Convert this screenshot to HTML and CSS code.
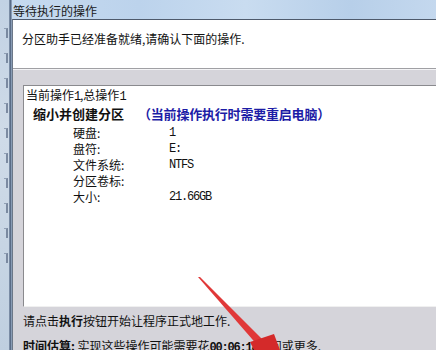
FILE: index.html
```html
<!DOCTYPE html>
<html lang="zh-CN">
<head>
    <meta charset="UTF-8">
    <title>等待执行的操作</title>
    <link rel="stylesheet" href="styles.css">
</head>
<body>
    <div class="screen">
        <div class="backdrop">
            <i></i><i></i><i></i><i></i><i></i><i></i><i></i><i></i><i></i><i></i>
        </div>
        <div class="edge"></div>
        <div class="dialog">
            <div class="titlebar">等待执行的操作</div>
            <div class="client">
                <div class="header">分区助手已经准备就绪,请确认下面的操作.</div>
                <div class="body">
                    <div class="listbox">
                        <div class="line">当前操作<span class="num">1</span>,总操作<span class="num">1</span></div>
                        <div class="op">
                            <span class="op-name">缩小并创建分区</span>
                            <span class="op-note">（当前操作执行时需要重启电脑）</span>
                        </div>
                        <div class="props">
                            <div class="prop"><span class="label">硬盘:</span><span class="num">1</span></div>
                            <div class="prop"><span class="label">盘符:</span><span class="num">E:</span></div>
                            <div class="prop"><span class="label">文件系统:</span><span class="num">NTFS</span></div>
                            <div class="prop"><span class="label">分区卷标:</span><span class="num"></span></div>
                            <div class="prop"><span class="label">大小:</span><span class="num">21.66GB</span></div>
                        </div>
                    </div>
                    <p class="hint">请点击<b>执行</b>按钮开始让程序正式地工作.</p>
                    <p class="hint"><b>时间估算:</b> 实现这些操作可能需要花<b class="num">00:06:18</b>时间或更多.</p>
                </div>
            </div>
        </div>

        <!-- red annotation arrow drawn over the dialog -->
        <svg class="arrow" width="436" height="350" viewBox="0 0 436 350">
            <polygon points="198,277 200,277 266,343 259,347" fill="#e03838"/>
            <polygon points="250,342 274,334 280,350 254,350" fill="#d42a2a"/>
        </svg>
    </div>
</body>
</html>
```

FILE: styles.css
```css
* {
    margin: 0;
    padding: 0;
    box-sizing: border-box;
}

body {
    font-family: "Noto Sans CJK SC", "Liberation Sans", sans-serif;
    font-size: 12px;
    color: #111;
    background: #d5d4da;
    overflow: hidden;
}

.screen {
    position: relative;
    width: 436px;
    height: 350px;
    display: flex;
    overflow: hidden;
}

.backdrop {
    width: 9px;
    background: linear-gradient(180deg, #c2d2e4 0%, #cfdbe8 40%, #bfcfe0 100%);
    display: flex;
    flex-direction: column;
    align-items: flex-end;
    gap: 15px;
    padding: 28px 1px 0 0;
}

.backdrop i {
    display: block;
    width: 4px;
    height: 10px;
    border-right: 2px solid #5a6a84;
    border-top: 1px solid #7888a0;
    opacity: 0.7;
}

.edge {
    width: 3px;
    background: linear-gradient(90deg, #8a9cb4, #5a6c86, #9fb3cc);
}

.dialog {
    flex: 1;
    display: flex;
    flex-direction: column;
}

.titlebar {
    height: 22px;
    padding: 3px 0 0 1px;
    line-height: 16px;
    color: #1a1a1a;
    background: linear-gradient(90deg, #c6daef 0%, #bcd3ec 30%, #c9dcf0 55%, #b7cfe9 80%, #c4d8ee 100%);
}

.client {
    flex: 1;
    border-top: 1px solid #4e5a6c;
    border-left: 1px solid #6c7888;
    background: #d5d4da;
}

.header {
    height: 49px;
    padding: 11px 0 0 9px;
    line-height: 16px;
    background: #fff;
    border-bottom: 1px solid #a0a0a4;
}

.body {
    padding: 15px 0 0 10px;
    border-top: 1px solid #f4f4f6;
}

.listbox {
    height: 222px;
    background: #fff;
    border-top: 1px solid #8a8a8e;
    border-left: 1px solid #8a8a8e;
    border-bottom: 1px solid #f0f0f0;
    padding: 1px 0 0 2px;
}

.line {
    line-height: 16px;
}

.num {
    font-family: "Liberation Mono", monospace;
    font-size: 12px;
    letter-spacing: -1.2px;
}

.op {
    display: flex;
    gap: 14px;
    padding-left: 7px;
    line-height: 17px;
    font-size: 13px;
    font-weight: bold;
}

.op-note {
    color: #1c1ca6;
    letter-spacing: -0.2px;
}

.props {
    padding: 3px 0 0 47px;
}

.prop {
    display: flex;
    line-height: 16px;
}

.label {
    width: 96px;
}

.hint {
    padding-top: 7px;
    line-height: 14px;
    white-space: nowrap;
}

.hint + .hint {
    padding-top: 11px;
}

.arrow {
    position: absolute;
    left: 0;
    top: 0;
}
```
